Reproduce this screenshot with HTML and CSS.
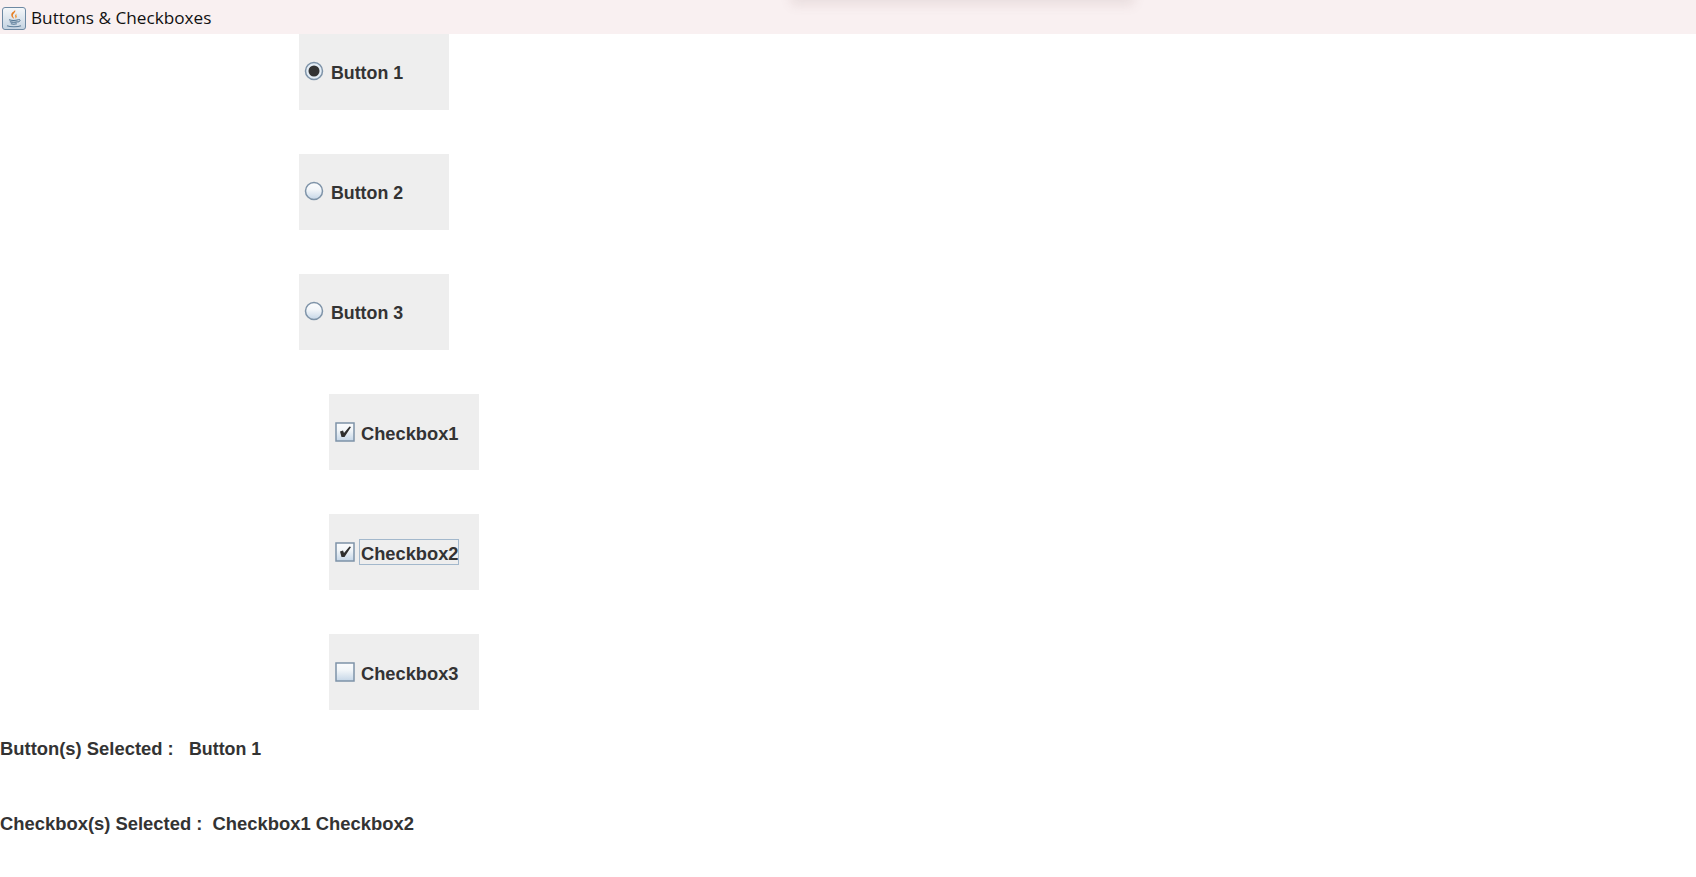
FILE: index.html
```html
<!DOCTYPE html>
<html lang="en">
<head>
<meta charset="utf-8">
<title>Buttons &amp; Checkboxes</title>
<link rel="stylesheet" href="styles.css">
</head>
<body>
<header class="titlebar">
  <span class="app-icon">
    <svg viewBox="0 0 24 24" width="24" height="24">
      <defs><linearGradient id="ib" x1="0" y1="0" x2="0" y2="1"><stop offset="0" stop-color="#f6f8fa"/><stop offset="1" stop-color="#c4d3e1"/></linearGradient></defs>
      <rect x="0.5" y="0.5" width="23" height="22" rx="2.5" fill="url(#ib)" stroke="#6d89a3"/>
      <path d="M13 3c1.500 2.500-3 3.500-2 6.500.3.800 1 1.300 1 2.200-2-1-3.500-3-2.500-5.200.7-1.500 3-1.800 3.500-3.500z" fill="#e67e22"/>
      <path d="M15 6.500c-1.700 1-2.500 2-1.700 3.500.3.600.2 1.100-.3 1.600 1.800-.7 2.300-1.800 1.500-3-.4-.7-.1-1.300.5-2.100z" fill="#ee9a3c"/>
      <path d="M7 12.800c2 .6 7 .6 9.500 0M7.800 14.800c2 .5 6 .5 8 0M8.800 16.800c1.500.4 4.500.4 6 0" fill="none" stroke="#4f7391" stroke-width="1.100"/>
      <path d="M16.500 12.500c2.200-.5 2.200 2.200-.7 2.500" fill="none" stroke="#4f7391" stroke-width="1"/>
      <path d="M5 18.800c3 1.200 11 1.200 14 0" fill="none" stroke="#5f7f9b" stroke-width="1.100"/>
    </svg>
  </span>
  <span class="title-text">Buttons &amp; Checkboxes</span>
  <span class="window-shadow"></span>
</header>
<main class="content">
  <section class="controls">
    <label class="option">
      <svg class="indicator" viewBox="0 0 20 20" width="20" height="20">
        <circle cx="10" cy="10" r="8.500" fill="#e4edf5" stroke="#7e93a8" stroke-width="1.500"/>
        <circle cx="10" cy="10" r="5.500" fill="#333333"/>
      </svg>
      <span class="short-label">Button 1</span>
    </label>
    <label class="option">
      <svg class="indicator" viewBox="0 0 20 20" width="20" height="20">
        <defs><linearGradient id="rg" x1="0" y1="0" x2="0" y2="1"><stop offset="0" stop-color="#fbfcfd"/><stop offset=".4" stop-color="#f4f7fa"/><stop offset="1" stop-color="#c5d6e7"/></linearGradient></defs>
        <circle cx="10" cy="10" r="8.500" fill="url(#rg)" stroke="#7e93a8" stroke-width="1.500"/>
      </svg>
      <span class="short-label">Button 2</span>
    </label>
    <label class="option">
      <svg class="indicator" viewBox="0 0 20 20" width="20" height="20">
        <circle cx="10" cy="10" r="8.500" fill="url(#rg)" stroke="#7e93a8" stroke-width="1.500"/>
      </svg>
      <span class="short-label">Button 3</span>
    </label>
    <label class="option option-check">
      <svg class="indicator" viewBox="0 0 20 20" width="20" height="20">
        <defs><linearGradient id="cg" x1="0" y1="0" x2="0" y2="1"><stop offset="0" stop-color="#fbfcfd"/><stop offset=".4" stop-color="#f2f6f9"/><stop offset="1" stop-color="#c5d6e7"/></linearGradient></defs>
        <rect x="1" y="1" width="18" height="18" fill="url(#cg)" stroke="#7e93a8" stroke-width="1.500"/>
        <path d="M5 9.500l3-1 1 2.500 5.500-6.500 1.500.5-6.500 10h-3z" fill="#2f2f2f"/>
      </svg>
      <span>Checkbox1</span>
    </label>
    <label class="option option-check">
      <svg class="indicator" viewBox="0 0 20 20" width="20" height="20">
        <rect x="1" y="1" width="18" height="18" fill="url(#cg)" stroke="#7e93a8" stroke-width="1.500"/>
        <path d="M5 9.500l3-1 1 2.500 5.500-6.500 1.500.5-6.500 10h-3z" fill="#2f2f2f"/>
      </svg>
      <span class="focused">Checkbox2</span>
    </label>
    <label class="option option-check">
      <svg class="indicator" viewBox="0 0 20 20" width="20" height="20">
        <rect x="1" y="1" width="18" height="18" fill="url(#cg)" stroke="#7e93a8" stroke-width="1.500"/>
      </svg>
      <span>Checkbox3</span>
    </label>
  </section>
  <p class="summary">Button(s) Selected :&nbsp;&nbsp; <span class="short-label">Button 1</span></p>
  <p class="summary">Checkbox(s) Selected :&nbsp; Checkbox1 Checkbox2</p>
</main>
</body>
</html>
```
FILE: styles.css
```css
html, body {
  margin: 0;
  padding: 0;
  height: 100%;
  background: #ffffff;
  overflow: hidden;
}
body {
  font-family: "Liberation Sans", Arial, sans-serif;
  color: #333333;
}
.titlebar {
  position: relative;
  display: flex;
  align-items: center;
  height: 34px;
  background: #f9f0f1;
  overflow: hidden;
}
.app-icon {
  display: flex;
  margin: 4px 5px 0 2px;
}
.title-text {
  font-family: "Open Sans", sans-serif;
  font-size: 17.2px;
  color: #111111;
}
.window-shadow {
  position: absolute;
  left: 795px;
  top: -10px;
  width: 335px;
  height: 10px;
  box-shadow: 0 1px 12px 4px rgba(120, 90, 90, 0.12);
}
.controls {
  display: flex;
  flex-direction: column;
  gap: 44px;
}
.option {
  display: flex;
  align-items: center;
  gap: 7px;
  box-sizing: border-box;
  width: 150px;
  height: 76px;
  margin-left: 299px;
  padding-left: 5px;
  padding-bottom: 1px;
  background: #eeeeee;
  font-size: 18.4px;
  font-weight: bold;
}
.option-check {
  gap: 6px;
  margin-left: 329px;
  padding-left: 6px;
  font-size: 18.3px;
}
.indicator {
  flex: none;
  margin-top: -1px;
}
.option-check .indicator {
  margin-top: 1px;
}
.option span {
  margin-top: 3px;
}
.option-check span {
  margin-top: 4px;
}
.short-label {
  font-size: 17.8px;
}
.option-check .focused {
  box-sizing: border-box;
  width: 96px;
  height: 22px;
  margin-top: 1px;
  padding-top: 3px;
  line-height: 19px;
  white-space: nowrap;
  outline: 1px solid #a3b8cc;
  outline-offset: 1px;
}
.summary {
  margin: 0;
  height: 75px;
  font-size: 18.4px;
  font-weight: bold;
  line-height: 77px;
}
```
